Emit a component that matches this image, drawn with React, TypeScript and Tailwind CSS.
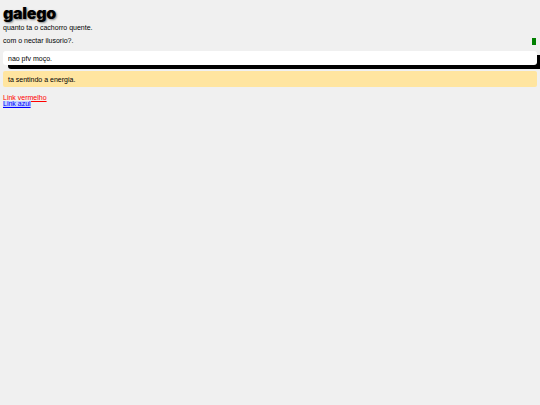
export default function App() {
  return (
    <div className="min-h-[405px] w-[540px] bg-[#f0f0f0] px-[3px] pt-[4px] text-[7px] leading-[9px] text-black" style={{ fontFamily: '"Liberation Sans", Arial, sans-serif' }}>
      <h1 className="text-[16px] font-black leading-[18px] tracking-[-0.3px] [text-shadow:1px_1px_2px_rgba(0,0,0,0.45)]" style={{ fontFamily: 'Inter, "Liberation Sans", sans-serif' }}>galego</h1>
      <p className="mt-[1px]">quanto ta o cachorro quente.</p>
      <div className="mt-[4px] flex items-center justify-between">
        <p>com o nectar ilusorio?.</p>
        <span className="mr-[1px] mt-[1px] block h-[7px] w-[4px] bg-[#008000]" />
      </div>
      <div className="mt-[6px] rounded-[3px] bg-white px-[5px] pb-[2px] pt-[3px] shadow-[5px_4px_0_#000]">nao pfv moço.</div>
      <div className="mt-[6px] rounded-[2px] bg-[#ffe5a0] px-[5px] pb-[3px] pt-[4px]">ta sentindo a energia.</div>
      <div className="mt-[8px] flex flex-col items-start leading-[6px]">
        <a href="#" className="text-[#ff0000] underline">Link vermelho</a>
        <a href="#" className="bg-[#c0d0ff] text-[#0000ff] underline">Link azul</a>
      </div>
    </div>
  );
}
